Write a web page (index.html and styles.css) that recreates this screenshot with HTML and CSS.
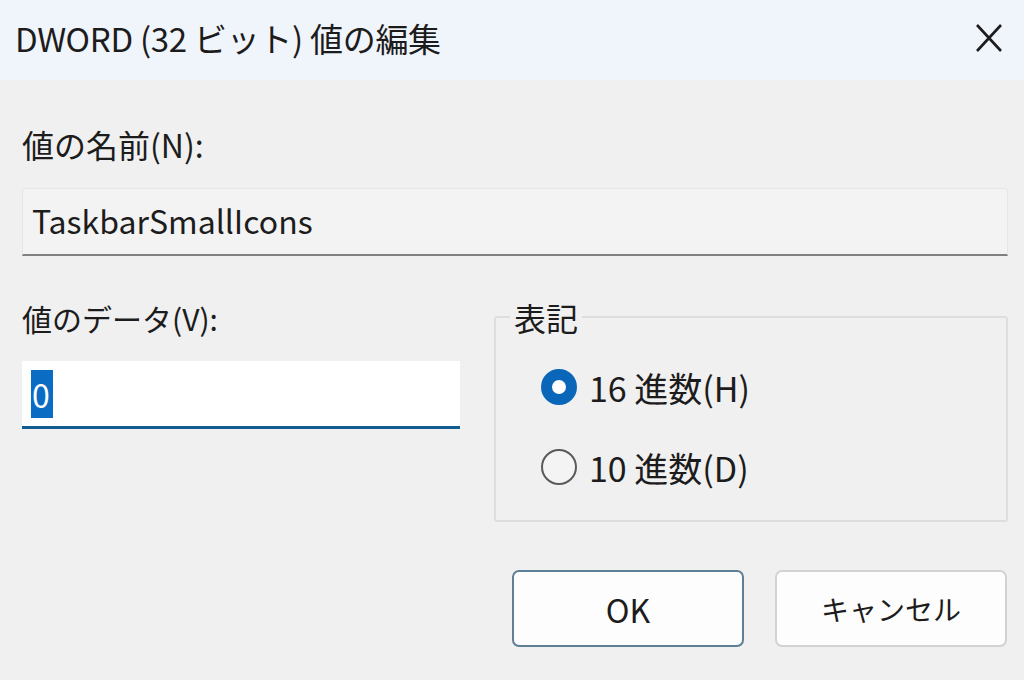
FILE: index.html
```html
<!DOCTYPE html>
<html lang="ja">
<head>
<meta charset="utf-8">
<link rel="stylesheet" href="styles.css">
</head>
<body>
<div class="dialog">
  <div class="titlebar">
    <span class="title">DWORD (32 ビット) 値の編集</span>
    <svg class="close" width="26" height="30" viewBox="0 0 26 30"><path d="M1 2 L25 28 M25 2 L1 28" stroke="#1c1c1c" stroke-width="2.6" fill="none"/></svg>
  </div>
  <div class="body">
    <div class="label name-label">値の名前(N):</div>
    <div class="namefield">TaskbarSmallIcons</div>
    <div class="row">
      <div class="left">
        <div class="label data-label">値のデータ(V):</div>
        <div class="datafield"><span class="sel">0</span></div>
      </div>
      <fieldset class="group">
        <legend>表記</legend>
        <div class="radio"><span class="dot on"></span><span>16 進数(H)</span></div>
        <div class="radio"><span class="dot"></span><span>10 進数(D)</span></div>
      </fieldset>
    </div>
    <div class="buttons">
      <div class="btn ok">OK</div>
      <div class="btn cancel">キャンセル</div>
    </div>
  </div>
</div>
</body>
</html>
```

FILE: styles.css
```css
html, body {
  margin: 0;
  padding: 0;
}
body {
  width: 1024px;
  height: 680px;
  background: #f0f0f0;
  font-family: "Noto Sans CJK JP", "Noto Sans", sans-serif;
  color: #1c1c1c;
  overflow: hidden;
}
.dialog {
  display: flex;
  flex-direction: column;
  height: 680px;
}
.titlebar {
  height: 80px;
  background: #f0f4fb;
  display: flex;
  align-items: center;
  justify-content: space-between;
  padding: 0 22px 0 15px;
  box-sizing: border-box;
}
.title {
  font-size: 33px;
  letter-spacing: -0.3px;
  margin-top: -4px;
}
.close {
  margin-top: -4px;
}
.body {
  padding: 0 16px 0 22px;
  display: flex;
  flex-direction: column;
}
.label {
  line-height: 40px;
}
.name-label {
  font-size: 32px;
  margin-top: 44px;
}
.namefield {
  margin-top: 24px;
  height: 68px;
  background: #f3f3f3;
  border: 1px solid #e6e6e6;
  border-bottom: 2px solid #808080;
  border-radius: 3px 3px 0 0;
  font-size: 32px;
  display: flex;
  align-items: center;
  padding-left: 9px;
  padding-bottom: 4px;
  box-sizing: border-box;
}
.row {
  display: flex;
  justify-content: space-between;
  margin-top: 33px;
}
.left {
  width: 438px;
  display: flex;
  flex-direction: column;
}
.data-label {
  font-size: 30px;
  margin-top: 9px;
}
.datafield {
  margin-top: 23px;
  height: 68px;
  background: #fff;
  border-bottom: 3px solid #125c92;
  box-sizing: border-box;
  display: flex;
  align-items: center;
  padding-left: 9px;
}
.sel {
  background: #0a6cc2;
  color: #fff;
  font-size: 32px;
  line-height: 48px;
  padding: 0 3px 0 1px;
}
.group {
  margin: 13px 0 0 0;
  width: 514px;
  height: 220px;
  box-sizing: border-box;
  border: 2px solid #dedede;
  border-radius: 3px;
  padding: 35px 0 0 45px;
  min-width: 0;
}
.group legend {
  font-size: 32px;
  line-height: 30px;
  padding: 0 4px;
  margin-left: -31px;
}
.radio {
  display: flex;
  align-items: center;
  font-size: 34px;
  height: 40px;
  gap: 12px;
}
.radio + .radio {
  margin-top: 40px;
}
.dot {
  width: 36px;
  height: 36px;
  border-radius: 50%;
  box-sizing: border-box;
  border: 2px solid #5a5a5a;
  background: #f4f4f4;
  flex: none;
}
.dot.on {
  border: 11px solid #0a66b8;
  background: #fff;
}
.buttons {
  display: flex;
  justify-content: flex-end;
  gap: 31px;
  margin-top: 48px;
  padding-right: 1px;
}
.btn {
  width: 232px;
  height: 77px;
  box-sizing: border-box;
  background: #fdfdfd;
  border: 2px solid #d2d2d2;
  border-radius: 7px;
  display: flex;
  align-items: center;
  justify-content: center;
  font-size: 32px;
}
.btn.cancel {
  font-size: 28px;
}
.btn.ok {
  border-color: #5e8096;
}
```
